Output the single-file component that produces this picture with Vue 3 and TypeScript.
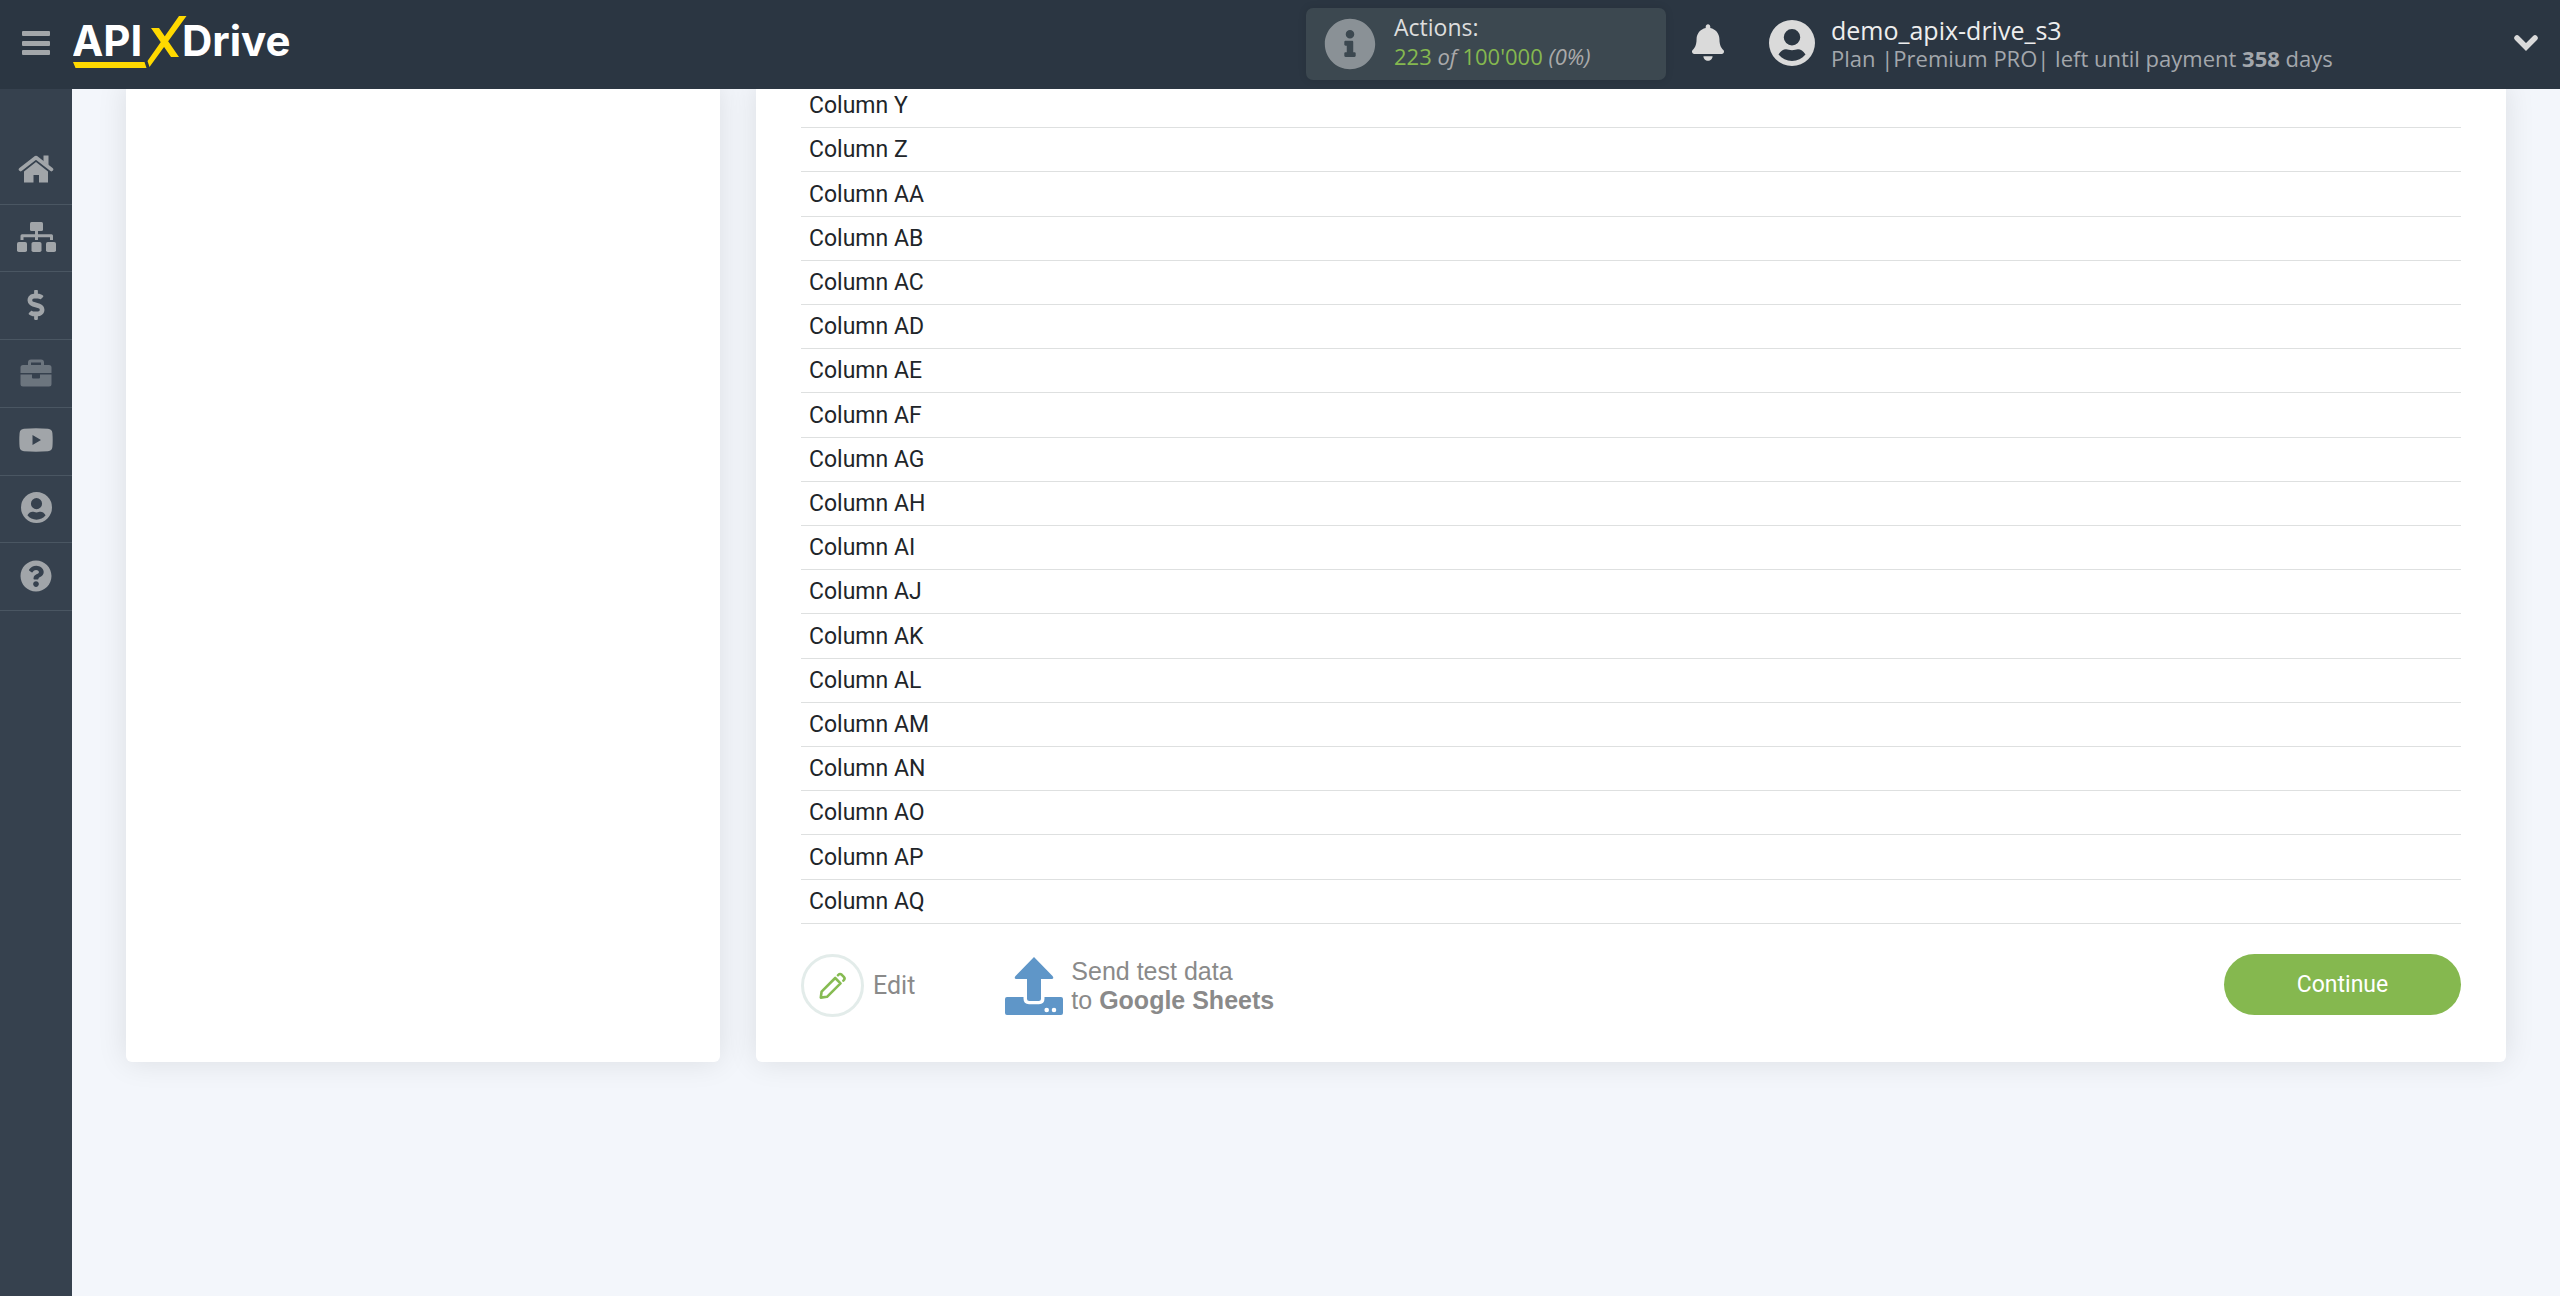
<script setup lang="ts">
interface NavItem {
  id: string
  label: string
  muted?: boolean
}

const navItems: NavItem[] = [
  { id: 'home', label: 'Home' },
  { id: 'connections', label: 'Connections' },
  { id: 'billing', label: 'Billing' },
  { id: 'business', label: 'Business', muted: true },
  { id: 'video', label: 'Video' },
  { id: 'profile', label: 'Profile' },
  { id: 'help', label: 'Help' },
]

const columns: string[] = ['Y', 'Z', ...'ABCDEFGHIJKLMNOPQ'.split('').map((letter) => 'A' + letter)]
</script>

<template>
  <div class="page">
    <header class="topbar">
      <button class="icon-button" type="button" aria-label="Toggle menu">
        <svg width="28" height="24" viewBox="0 0 28 24" fill="#a3a7aa">
          <rect width="28" height="5" rx="1" />
          <rect y="10" width="28" height="5" rx="1" />
          <rect y="19" width="28" height="5" rx="1" />
        </svg>
      </button>
      <a class="logo" href="#" aria-label="ApiX-Drive">
        <svg width="222" height="56" viewBox="0 0 222 56">
          <g class="logo-text">
            <text x="-1" y="42">API</text>
            <text x="109" y="42">Drive</text>
          </g>
          <path fill="#ffd900" d="M0 48H71.500L73.500 54H2.500ZM106 2H113.500L76.500 53L74.500 47ZM78 14H86L106 43H98Z" />
        </svg>
      </a>

      <section class="actions">
        <svg width="52" height="52" viewBox="0 0 512 512" fill="#8a9196">
          <path d="M256 8C119.043 8 8 119.083 8 256c0 136.997 111.043 248 248 248s248-111.003 248-248C504 119.083 392.957 8 256 8zm0 110c23.196 0 42 18.804 42 42s-18.804 42-42 42-42-18.804-42-42 18.804-42 42-42zm56 254c0 6.627-5.373 12-12 12h-88c-6.627 0-12-5.373-12-12v-24c0-6.627 5.373-12 12-12h12v-64h-12c-6.627 0-12-5.373-12-12v-24c0-6.627 5.373-12 12-12h64c6.627 0 12 5.373 12 12v100h12c6.627 0 12 5.373 12 12v24z" />
        </svg>
        <div class="actions-info">
          <div class="actions-title">Actions:</div>
          <div class="actions-count"><b>223</b> <i>of</i> <b>100'000</b> <i>(0%)</i></div>
        </div>
      </section>

      <button class="icon-button bell" type="button" aria-label="Notifications">
        <svg width="32" height="37" viewBox="0 0 448 512" fill="#dadada">
          <path d="M224 512c35.320 0 63.970-28.650 63.970-64H160.030c0 35.350 28.650 64 63.970 64zm215.390-149.710c-19.320-20.760-55.470-51.990-55.470-154.290 0-77.700-54.480-139.900-127.940-155.160V32c0-17.670-14.320-32-31.980-32s-31.980 14.330-31.980 32v20.840C118.560 68.100 64.080 130.300 64.080 208c0 102.300-36.150 133.530-55.470 154.290-6 6.450-8.660 14.160-8.610 21.710.11 16.400 12.980 32 32.100 32h383.800c19.120 0 32-15.600 32.100-32 .05-7.550-2.610-15.270-8.610-21.710z" />
        </svg>
      </button>

      <div class="account">
        <svg width="46" height="46" viewBox="0 0 46 46">
          <path fill="#dadada" fill-rule="evenodd" d="M23 0a23 23 0 1 0 0 46a23 23 0 1 0 0-46ZM23 9a8 8 0 1 1 0 16.500a8 8 0 1 1 0-16.500ZM9.500 34.500C11.500 31 14.500 29.300 17 29.300C19 29.300 20.500 30.300 23 30.300S27 29.300 29 29.300C31.500 29.300 34.500 31 36.500 34.500C33 38.700 28.500 41 23 41S13 38.700 9.500 34.500Z" />
        </svg>
        <div>
          <div class="account-name">demo_apix-drive_s3</div>
          <div class="account-plan">Plan |Premium PRO| left until payment <b>358</b> days</div>
        </div>
      </div>

      <button class="icon-button" type="button" aria-label="Open account menu">
        <svg width="24" height="16" viewBox="0 0 24 16">
          <path d="M3 3L12 12L21 3" fill="none" stroke="#dadada" stroke-width="5.500" stroke-linejoin="miter" stroke-linecap="round" />
        </svg>
      </button>
    </header>

    <nav class="sidebar" aria-label="Main">
      <ul>
        <li v-for="item in navItems" :key="item.id">
          <a href="#" :aria-label="item.label" :class="{ muted: item.muted }">
            <svg v-if="item.id === 'home'" width="36" height="28" viewBox="0 0 36 28">
              <path d="M25.500 .5h5v10l-5-4z" />
              <path d="M2.500 14.500L18 2.500L33.500 14.500" fill="none" stroke="currentColor" stroke-width="3.600" stroke-linecap="round" stroke-linejoin="round" />
              <path d="M6 16.500L18 7L30 16.500V27.500H21V20H15.500V27.500H6Z" />
            </svg>
            <svg v-else-if="item.id === 'connections'" width="40" height="30" viewBox="0 0 40 30">
              <rect x="14" width="13" height="9" rx="1.500" />
              <rect x="1" y="20" width="10" height="10" rx="1.800" />
              <rect x="15.500" y="20" width="10" height="10" rx="1.800" />
              <rect x="30" y="20" width="10" height="10" rx="1.800" />
              <path d="M20.500 8V18M6 18V13.700H35.500V18" fill="none" stroke="currentColor" stroke-width="3" stroke-linejoin="round" />
            </svg>
            <svg v-else-if="item.id === 'billing'" width="18" height="30" viewBox="0 0 288 512">
              <path d="M209.200 233.400l-108-31.600C88.700 198.200 80 186.500 80 173.500c0-16.300 13.200-29.500 29.500-29.500h66.300c12.200 0 24.200 3.700 34.200 10.500 6.100 4.100 14.300 3.100 19.500-2l34.800-34c7.100-6.900 6.100-18.400-1.800-24.500C238 74.800 207.400 64.100 176 64V16c0-8.800-7.200-16-16-16h-32c-8.800 0-16 7.200-16 16v48h-2.500C45.800 64-5.400 118.700.5 183.600c4.200 46.100 39.400 83.600 83.800 96.600l102.500 30c12.500 3.700 21.200 15.300 21.200 28.300 0 16.300-13.200 29.500-29.500 29.500h-66.300C100 368 88 364.300 78 357.500c-6.100-4.100-14.300-3.100-19.500 2l-34.800 34c-7.100 6.900-6.100 18.400 1.800 24.500 24.500 19.200 55.100 29.900 86.500 30v48c0 8.800 7.200 16 16 16h32c8.800 0 16-7.200 16-16v-48.200c46.600-.9 90.300-28.600 105.700-72.700 21.500-61.600-14.600-124.800-72.500-141.700z" />
            </svg>
            <svg v-else-if="item.id === 'business'" width="32" height="28" viewBox="0 0 32 28">
              <path d="M9.500 8V3.500Q9.500 2 11 2H21Q22.500 2 22.500 3.500V8" fill="none" stroke="currentColor" stroke-width="3" />
              <path d="M3 6H29Q31.500 6 31.500 8.500V14H.5V8.500Q.5 6 3 6ZM.5 15.500H12V18.500Q12 19.500 13 19.500H19Q20 19.500 20 18.500V15.500H31.500V25Q31.500 27.500 29 27.500H3Q.5 27.500 .5 25Z" />
            </svg>
            <svg v-else-if="item.id === 'video'" width="34" height="24" viewBox="0 0 34 24">
              <path fill-rule="evenodd" d="M5 .8Q17 -.2 29 .8Q33 1.200 33.400 5Q34 12 33.400 19Q33 22.800 29 23.300Q17 24.200 5 23.300Q1 22.800 .6 19Q0 12 .6 5Q1 1.200 5 .8ZM13.500 7V17L22 12Z" />
            </svg>
            <svg v-else-if="item.id === 'profile'" width="31" height="31" viewBox="0 0 46 46">
              <path fill-rule="evenodd" d="M23 0a23 23 0 1 0 0 46a23 23 0 1 0 0-46ZM23 9a8 8 0 1 1 0 16.500a8 8 0 1 1 0-16.500ZM9.500 34.500C11.500 31 14.500 29.300 17 29.300C19 29.300 20.500 30.300 23 30.300S27 29.300 29 29.300C31.500 29.300 34.500 31 36.500 34.500C33 38.700 28.500 41 23 41S13 38.700 9.500 34.500Z" />
            </svg>
            <svg v-else width="32" height="32" viewBox="0 0 512 512">
              <path d="M504 256c0 136.997-111.043 248-248 248S8 392.997 8 256C8 119.083 119.043 8 256 8s248 111.083 248 248zM262.655 90c-54.497 0-89.255 22.957-116.549 63.758-3.536 5.286-2.353 12.415 2.715 16.258l34.699 26.310c5.205 3.947 12.621 3.008 16.665-2.122 17.864-22.658 30.113-35.797 57.303-35.797 20.429 0 45.698 13.148 45.698 32.958 0 14.976-12.363 22.667-32.534 33.976C247.128 238.528 216 254.941 216 296v4c0 6.627 5.373 12 12 12h56c6.627 0 12-5.373 12-12v-1.333c0-28.462 83.186-29.647 83.186-106.667 0-58.002-60.165-102-116.531-102zM256 338c-25.365 0-46 20.635-46 46 0 25.364 20.635 46 46 46s46-20.636 46-46c0-25.365-20.635-46-46-46z" />
            </svg>
          </a>
        </li>
      </ul>
    </nav>

    <main class="content">
      <aside class="card"></aside>
      <section class="card details">
        <table>
          <tbody>
            <tr v-for="name in columns" :key="name">
              <th scope="row">Column {{ name }}</th>
              <td></td>
            </tr>
          </tbody>
        </table>
        <div class="footer">
          <button class="edit" type="button">
            <span class="edit-ring">
              <svg width="28" height="28" viewBox="0 0 28 28" fill="none" stroke="#86bb52" stroke-width="2.600" stroke-linejoin="round" stroke-linecap="round">
                <path d="M1.800 25.600L2.600 19.600L16.200 6L21.500 11.300L8 24.800ZM19 3.200Q20.800 1 22.800 2.800L24.800 4.800Q26.500 6.700 24.400 8.600" />
              </svg>
            </span>
            Edit
          </button>
          <button class="send" type="button">
            <svg width="58" height="58" viewBox="0 0 58 58" fill="#5f96c8">
              <path d="M29 0L47.500 19Q49.500 22 46.500 22H36V41.500Q36 44 33.500 44H24.500Q22 44 22 41.500V22H11.500Q8.500 22 10.500 19Z" />
              <path fill-rule="evenodd" d="M2 40H18.500V41.500Q18.500 47.200 24 47.200H34Q39.500 47.200 39.500 41.500V40H56Q58 40 58 42V56Q58 58 56 58H2Q0 58 0 56V42Q0 40 2 40ZM41.700 50.700a2.300 2.300 0 1 0 0 4.600a2.300 2.300 0 1 0 0-4.600ZM49 50.700a2.300 2.300 0 1 0 0 4.600a2.300 2.300 0 1 0 0-4.600Z" />
            </svg>
            <span>Send test data<br />to <b>Google Sheets</b></span>
          </button>
          <button class="continue" type="button">Continue</button>
        </div>
      </section>
    </main>
  </div>
</template>

<style>
body {
  margin: 0;
  background: #f3f6fb;
}
</style>

<style scoped>
.page {
  min-height: 100vh;
  box-sizing: border-box;
  padding: 84px 54px 0 126px;
  font-family: Roboto, sans-serif;
}

button {
  font: inherit;
  color: inherit;
  background: none;
  border: 0;
  padding: 0;
  cursor: pointer;
}

svg {
  display: block;
  flex: none;
}

.topbar {
  position: fixed;
  inset: 0 0 auto;
  z-index: 2;
  display: flex;
  align-items: center;
  height: 89px;
  box-sizing: border-box;
  padding: 0 22px 1px;
  background: #2b3642;
  font-family: "Open Sans", sans-serif;
}

.icon-button {
  padding-bottom: 3px;
}

.logo {
  margin: 0 auto 4px 23px;
}

.logo-text {
  font: 700 42px Inter, sans-serif;
  fill: #fff;
}

.actions {
  display: flex;
  align-items: center;
  gap: 18px;
  width: 360px;
  height: 72px;
  box-sizing: border-box;
  padding: 0 18px;
  border-radius: 7px;
  background: #3c4850;
  box-shadow: 0 0 8px rgba(0, 0, 0, 0.1);
}

.actions-info {
  padding-bottom: 5px;
}

.actions-title {
  font-size: 23px;
  line-height: 29px;
  color: #ddd;
}

.actions-count {
  font-size: 22px;
  line-height: 29px;
  color: #aaa;
}

.actions-count b {
  font-weight: 400;
  color: #85b84f;
}

.bell {
  margin: 0 45px 0 26px;
}

.account {
  display: flex;
  align-items: center;
  gap: 16px;
  width: 745px;
}

.account svg {
  margin-bottom: 2px;
}

.account-name {
  font-size: 25px;
  line-height: 28px;
  color: #eee;
}

.account-plan {
  font-size: 22px;
  line-height: 28px;
  color: #a3a7ac;
}

.sidebar {
  position: fixed;
  inset: 89px auto 0 0;
  z-index: 1;
  width: 72px;
  box-sizing: border-box;
  padding-top: 48px;
  background: #36414e;
}

.sidebar ul {
  display: flex;
  flex-direction: column;
  height: 474px;
  margin: 0;
  padding: 0;
  list-style: none;
}

.sidebar li {
  flex: 1;
  border-bottom: 1px solid #4a5662;
}

.sidebar a {
  display: flex;
  align-items: center;
  justify-content: center;
  height: 100%;
  box-sizing: border-box;
  padding-bottom: 2px;
  color: #a1a5a9;
}

.sidebar a.muted {
  color: #6c757e;
}

.sidebar svg {
  fill: currentColor;
}

.content {
  display: grid;
  grid-template-columns: 297fr 875fr;
  gap: 36px;
}

.card {
  border-radius: 0 0 6px 6px;
  background: #fff;
  box-shadow: 0 0 30px rgba(0, 0, 0, 0.1);
}

.details {
  padding: 0 45px 45px;
}

table {
  width: 100%;
  height: 840px;
  border-collapse: separate;
  border-spacing: 0;
  font-size: 23px;
  line-height: 28px;
  color: #212529;
}

th,
td {
  padding: 1px 7px 0 8px;
  border-bottom: 1px solid #dee0e0;
  text-align: left;
  font-weight: 400;
}

.footer {
  display: flex;
  align-items: center;
  margin-top: 30px;
  color: #8a8a8a;
}

.edit {
  display: flex;
  align-items: center;
  gap: 9px;
  font-size: 25px;
}

.edit-ring {
  display: flex;
  align-items: center;
  justify-content: center;
  width: 63px;
  height: 63px;
  box-sizing: border-box;
  border: 3px solid #e3ecea;
  border-radius: 50%;
}

.send {
  display: flex;
  align-items: center;
  gap: 8px;
  margin-left: 90px;
  font: 25px/29px "Liberation Sans", Arial, sans-serif;
  text-align: left;
}

.continue {
  align-self: flex-start;
  width: 237px;
  height: 61px;
  margin-left: auto;
  border-radius: 31px;
  background: #85b84f;
  color: #fff;
  font-size: 23px;
}
</style>
